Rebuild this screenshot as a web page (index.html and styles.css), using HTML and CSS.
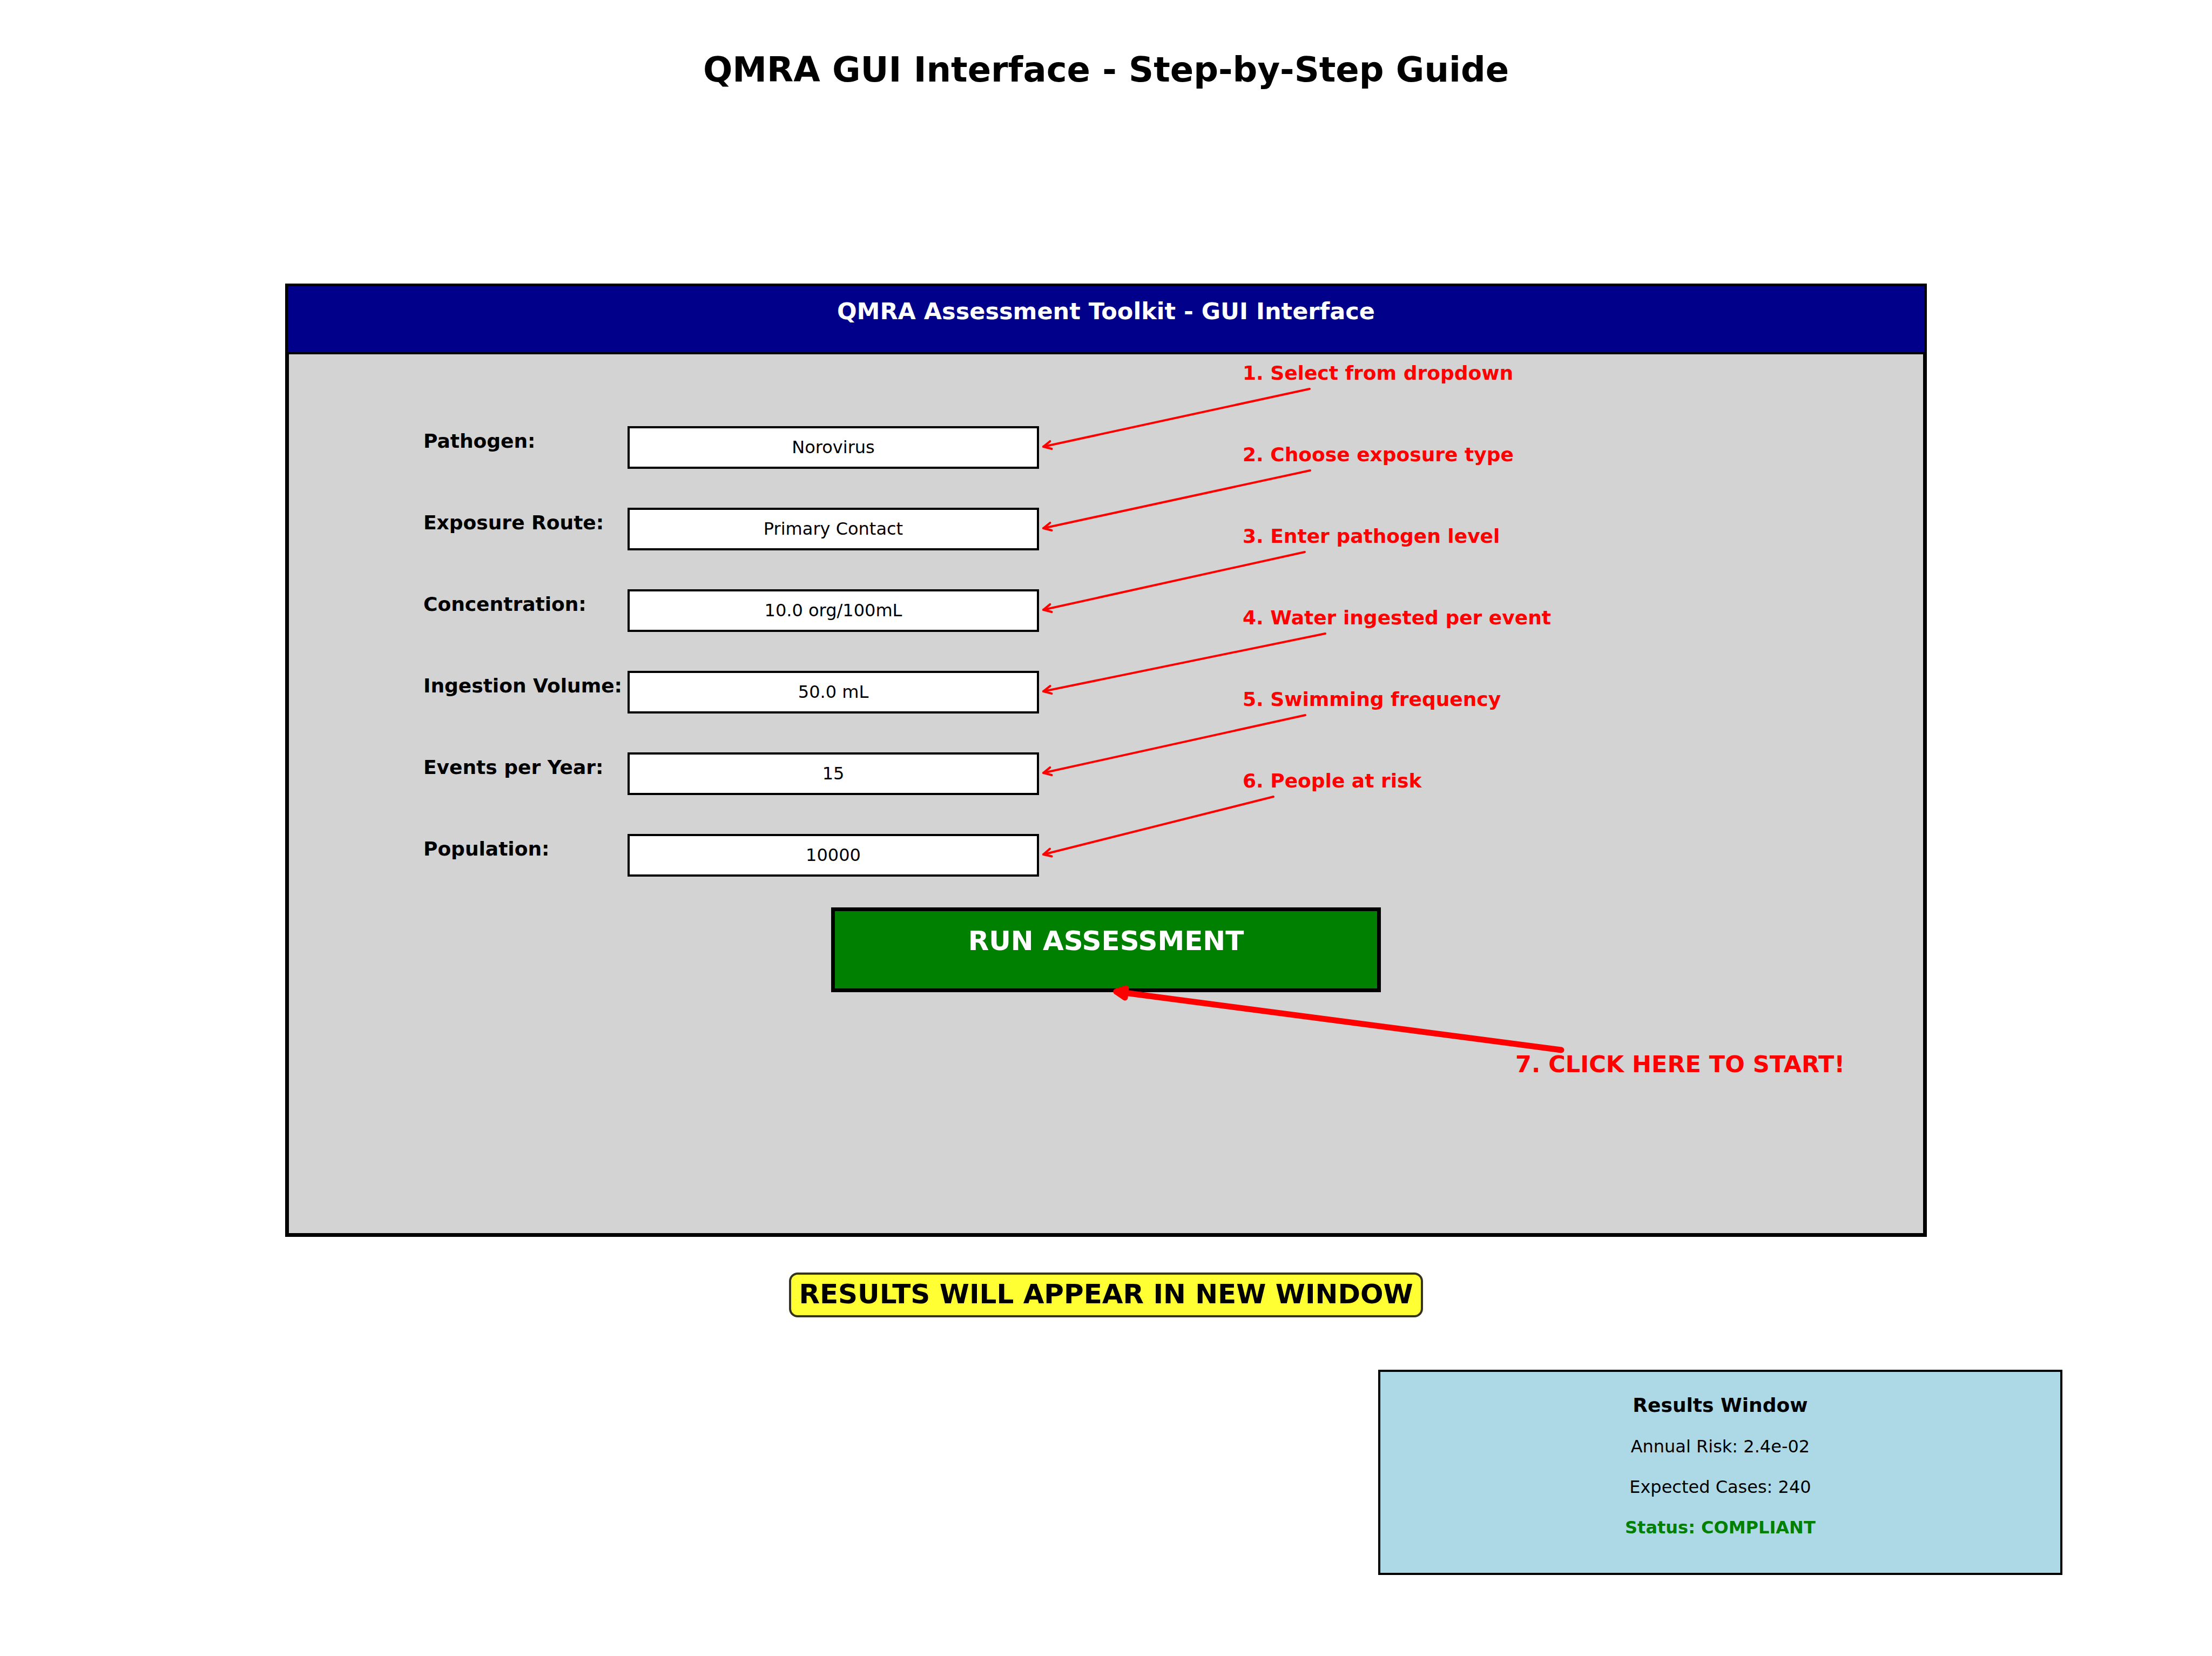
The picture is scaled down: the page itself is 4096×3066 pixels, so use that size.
FILE: index.html
```html
<!DOCTYPE html>
<html lang="en">
<head>
<meta charset="utf-8">
<title>QMRA GUI Interface - Step-by-Step Guide</title>
<link rel="stylesheet" href="styles.css">
</head>
<body>
<h1 class="page-title">QMRA GUI Interface - Step-by-Step Guide</h1>

<svg class="defs" width="0" height="0" aria-hidden="true">
  <defs>
    <marker id="open-head" markerUnits="userSpaceOnUse" markerWidth="40" markerHeight="40" orient="auto" overflow="visible">
      <path class="line" d="M14.3 -7.2 L0 0 L14.3 7.2"/>
    </marker>
  </defs>
</svg>

<main class="panel">
  <h2 class="panel-header">QMRA Assessment Toolkit - GUI Interface</h2>
  <form class="panel-body">
    <div class="columns">
      <div class="fields">
        <div class="field">
          <label for="pathogen">Pathogen:</label>
          <select id="pathogen"><option>Norovirus</option></select>
        </div>
        <div class="field">
          <label for="route">Exposure Route:</label>
          <select id="route"><option>Primary Contact</option></select>
        </div>
        <div class="field">
          <label for="concentration">Concentration:</label>
          <input id="concentration" type="text" value="10.0 org/100mL">
        </div>
        <div class="field">
          <label for="volume">Ingestion Volume:</label>
          <input id="volume" type="text" value="50.0 mL">
        </div>
        <div class="field">
          <label for="events">Events per Year:</label>
          <input id="events" type="text" value="15">
        </div>
        <div class="field">
          <label for="population">Population:</label>
          <input id="population" type="text" value="10000">
        </div>
      </div>
      <div class="steps">
        <p class="step">1. Select from dropdown
          <svg class="arrow" aria-hidden="true"><path class="line headed" d="M11 171 L504 64"/></svg></p>
        <p class="step">2. Choose exposure type
          <svg class="arrow" aria-hidden="true"><path class="line headed" d="M11 171 L505 64"/></svg></p>
        <p class="step">3. Enter pathogen level
          <svg class="arrow" aria-hidden="true"><path class="line headed" d="M11 171 L495 64"/></svg></p>
        <p class="step">4. Water ingested per event
          <svg class="arrow" aria-hidden="true"><path class="line headed" d="M11 171 L533 64"/></svg></p>
        <p class="step">5. Swimming frequency
          <svg class="arrow" aria-hidden="true"><path class="line headed" d="M11 171 L496 64"/></svg></p>
        <p class="step">6. People at risk
          <svg class="arrow" aria-hidden="true"><path class="line headed" d="M11 171 L437 64"/></svg></p>
      </div>
    </div>
    <button class="run" type="button">RUN ASSESSMENT</button>
    <div class="start-row">
      <p class="start">7. CLICK HERE TO START!
        <svg class="start-arrow" aria-hidden="true">
          <path class="shaft" d="M21 21 L845 129"/>
          <path class="head" d="M21 21 L39 15 L37 32 Z"/>
        </svg></p>
    </div>
  </form>
</main>

<p class="notice">RESULTS WILL APPEAR IN NEW WINDOW</p>

<section class="results">
  <h2 class="results-title">Results Window</h2>
  <p class="result">Annual Risk: 2.4e-02</p>
  <p class="result">Expected Cases: 240</p>
  <p class="result status">Status: COMPLIANT</p>
</section>
</body>
</html>
```

FILE: styles.css
```css
* {
  box-sizing: border-box;
}

body {
  display: flex;
  flex-direction: column;
  min-height: 100vh;
  margin: 0;
  padding-top: 91px;
  background: #fff;
  color: #000;
  font-family: "DejaVu Sans", sans-serif;
}

h1, h2, p {
  margin: 0;
}

.defs {
  position: absolute;
}

.page-title {
  font-size: 64px;
  line-height: 76px;
  text-align: center;
}

/* Main window */
.panel {
  margin: 358px 528px 0;
  border: 7px solid #000;
  border-top-width: 5px;
  background: lightgray;
}

.panel-header {
  margin: 0 -2px;
  padding: 21px 0 51px;
  border-bottom: 4px solid #000;
  background: darkblue;
  color: #fff;
  font-size: 43px;
  line-height: 50px;
  text-align: center;
}

.panel-body {
  display: flex;
  flex-direction: column;
  padding-bottom: 288px;
}

.columns {
  display: grid;
  grid-template-columns: 249fr 1140fr 377fr 1260fr;
}

.fields {
  grid-column: 2;
  display: flex;
  flex-direction: column;
  gap: 72px;
  padding-top: 133px;
}

.field {
  display: grid;
  grid-template-columns: 378fr 762fr;
  align-items: center;
}

.field label {
  padding-bottom: 24px;
  font-size: 36px;
  font-weight: bold;
  line-height: 42px;
  white-space: nowrap;
}

.field input,
.field select {
  width: 100%;
  height: 79px;
  margin: 0;
  padding: 0 0 2px;
  border: 4px solid #000;
  border-radius: 0;
  background: #fff;
  color: #000;
  font-family: inherit;
  font-size: 32px;
  text-align: center;
  text-align-last: center;
  appearance: none;
}

/* Numbered callouts beside the fields */
.steps {
  grid-column: 4;
  color: red;
  font-size: 36px;
  font-weight: bold;
  line-height: 42px;
}

.step {
  position: relative;
  height: 151px;
  padding-top: 14px;
}

.line {
  fill: none;
  stroke: red;
  stroke-width: 4px;
  stroke-linecap: round;
  stroke-linejoin: round;
}

.headed {
  marker-start: url(#open-head);
}

.arrow {
  position: absolute;
  top: 0;
  left: -380px;
  width: 560px;
  height: 190px;
  overflow: visible;
  pointer-events: none;
}

.run {
  align-self: center;
  width: 1018px;
  max-width: 100%;
  height: 157px;
  margin-top: 57px;
  padding: 0 0 33px;
  border: 7px solid #000;
  border-radius: 0;
  background: green;
  color: #fff;
  font-family: inherit;
  font-size: 50px;
  font-weight: bold;
}

.start-row {
  display: grid;
  grid-template-columns: 2271fr 755fr;
  padding-top: 108px;
}

.start {
  grid-column: 2;
  position: relative;
  color: red;
  font-size: 43px;
  font-weight: bold;
  line-height: 50px;
  white-space: nowrap;
}

.start-arrow {
  position: absolute;
  top: -130px;
  left: -760px;
  width: 880px;
  height: 150px;
  overflow: visible;
  pointer-events: none;
}

.shaft,
.head {
  fill: red;
  stroke: red;
  stroke-width: 11px;
  stroke-linecap: round;
  stroke-linejoin: round;
}

.notice {
  align-self: center;
  margin-top: 66px;
  padding: 10px 14px 12px;
  border: 4px solid #33331f;
  border-radius: 16px;
  background: #ffff33;
  font-size: 50px;
  font-weight: bold;
  line-height: 53px;
}

/* Results window */
.results {
  margin: 97px 277px 0 62.3%;
  padding: 23px 0 46px;
  border: 4px solid #000;
  background: lightblue;
  text-align: center;
}

.results-title {
  font-size: 36px;
  line-height: 78px;
}

.result {
  font-size: 32px;
  line-height: 75px;
}

.status {
  color: green;
  font-weight: bold;
}
```
